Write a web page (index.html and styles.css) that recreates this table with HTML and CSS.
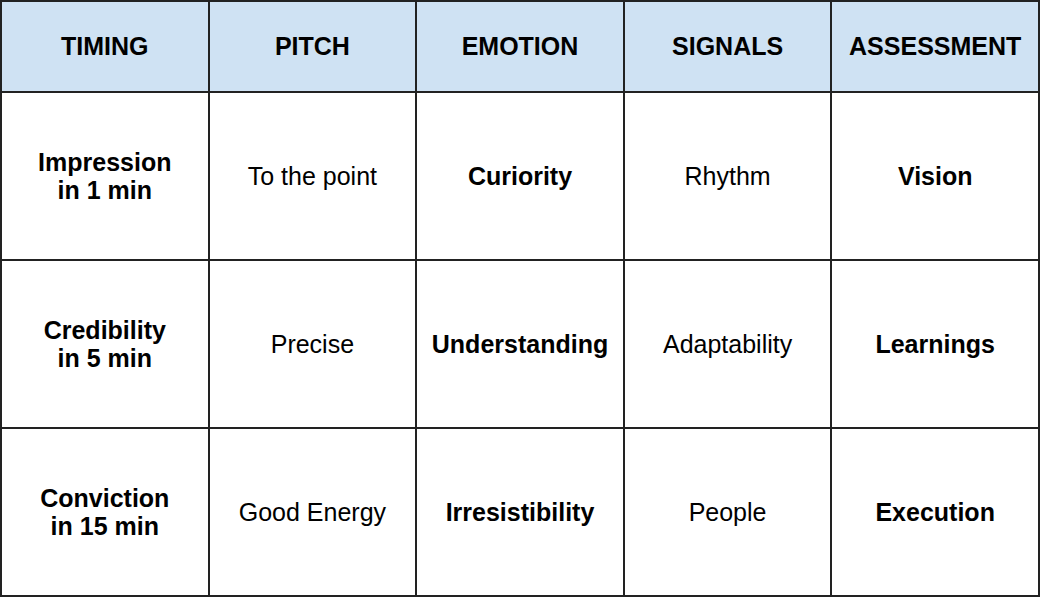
FILE: index.html
```html
<!DOCTYPE html>
<html>
<head>
<meta charset="utf-8">
<link rel="stylesheet" href="styles.css">
</head>
<body>
<table class="grid">
  <colgroup>
    <col class="c"><col class="c"><col class="c"><col class="c"><col class="c">
  </colgroup>
  <thead>
    <tr class="head">
      <th>TIMING</th>
      <th>PITCH</th>
      <th>EMOTION</th>
      <th>SIGNALS</th>
      <th>ASSESSMENT</th>
    </tr>
  </thead>
  <tbody>
    <tr class="row">
      <td class="b">Impression<br>in 1 min</td>
      <td>To the point</td>
      <td class="b">Curiority</td>
      <td>Rhythm</td>
      <td class="b">Vision</td>
    </tr>
    <tr class="row">
      <td class="b">Credibility<br>in 5 min</td>
      <td>Precise</td>
      <td class="b">Understanding</td>
      <td>Adaptability</td>
      <td class="b">Learnings</td>
    </tr>
    <tr class="row">
      <td class="b">Conviction<br>in 15 min</td>
      <td>Good Energy</td>
      <td class="b">Irresistibility</td>
      <td>People</td>
      <td class="b">Execution</td>
    </tr>
  </tbody>
</table>
</body>
</html>
```

FILE: styles.css
```css
html, body {
  margin: 0;
  padding: 0;
  background: #ffffff;
}

body {
  padding: 0;
  font-family: "Liberation Sans", Arial, sans-serif;
  color: #000000;
}

.grid {
  width: 1040px;
  table-layout: fixed;
  border-collapse: collapse;
  font-size: 25px;
  line-height: 1.13;
}

.grid th,
.grid td {
  border: 2px solid #222222;
  text-align: center;
  vertical-align: middle;
  padding: 0 6px;
}

.head th {
  height: 89px;
  background: #cfe2f3;
  font-weight: bold;
}

.row td {
  height: 166px;
  font-weight: normal;
}

.row td.b {
  font-weight: bold;
}
```
